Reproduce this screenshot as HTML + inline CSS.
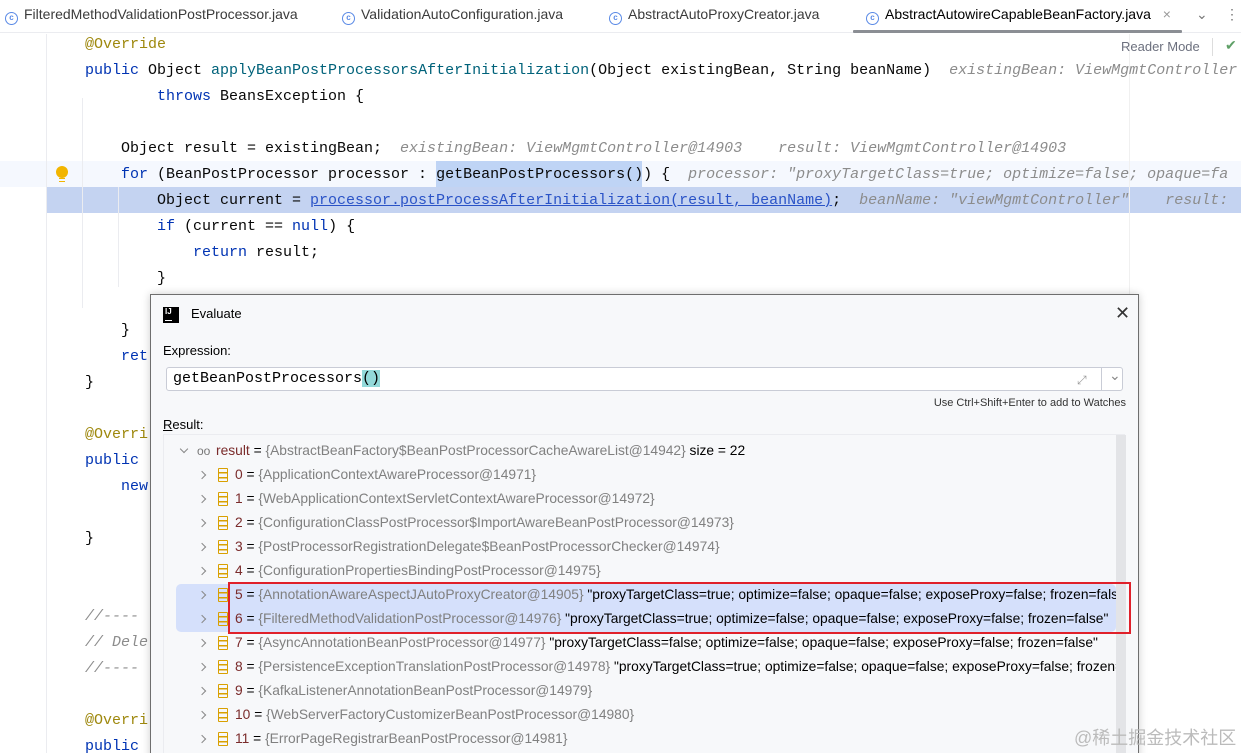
<!DOCTYPE html>
<html><head><meta charset="utf-8"><style>
*{margin:0;padding:0;box-sizing:border-box}
body{width:1241px;height:753px;overflow:hidden;background:#fff;position:relative;font-family:"Liberation Sans",sans-serif}
#wrap{position:absolute;left:0;top:0;width:1241px;height:753px;overflow:hidden}
.tabs{position:absolute;left:0;top:0;width:1241px;height:33px;border-bottom:1px solid #ebecf0;background:#fff}
.tab{position:absolute;top:6px;font-size:14px;color:#3b3b3b;white-space:nowrap}
.ci{display:inline-block;width:13px;height:13px;border:1.5px solid #5a8ae6;border-radius:50%;vertical-align:-1px;margin-right:6px;font-size:8px;color:#5a8ae6;text-align:center;line-height:10px;font-weight:bold}
.ul{position:absolute;left:853px;top:30px;width:329px;height:3px;background:#8b8e94;border-radius:1px}
.gl{position:absolute;top:34px;height:719px;width:1px;background:#ebecf0}
.code{position:absolute;font-family:"Liberation Mono",monospace;font-size:15px;color:#080808;white-space:pre;height:26px;line-height:26px}
.k{color:#0033b3}.m{color:#00627a}.a{color:#9e880d}.h{color:#8c8c8c;font-style:italic}.c{color:#8c8c8c;font-style:italic}
.u{color:#2a53c7;text-decoration:underline}
.dlg{position:absolute;left:150px;top:294px;width:989px;height:470px;background:#f7f8fa;border:1px solid #6e6e6e;box-shadow:0 0 8px rgba(0,0,0,.2)}
.tree{position:absolute;left:12px;top:139px;width:962px;height:330px;background:#f7f8fa;border-top:1px solid #ebecf0;border-left:1px solid #ebecf0}
.row{position:absolute;left:0;height:24px;line-height:24px;font-size:13.8px;white-space:nowrap;color:#000}
.chev{position:absolute;width:6px;height:6px;border-right:1.3px solid #888;border-bottom:1.3px solid #888;transform:rotate(-45deg)}
.ico{position:absolute;width:10px;height:14px;top:5px;border:1.5px solid #d9a000;border-radius:1px;background:linear-gradient(#d9a000,#d9a000) 0 3px/100% 1.5px no-repeat,linear-gradient(#d9a000,#d9a000) 0 7.5px/100% 1.5px no-repeat}
.i{color:#7a2b2b}.g{color:#808080}
</style></head><body><div id="wrap">
<div class="tabs">
<div class="tab" style="left:5px"><span class="ci">c</span>FilteredMethodValidationPostProcessor.java</div>
<div class="tab" style="left:342px"><span class="ci">c</span>ValidationAutoConfiguration.java</div>
<div class="tab" style="left:609px"><span class="ci">c</span>AbstractAutoProxyCreator.java</div>
<div class="tab" style="left:866px;color:#000"><span class="ci">c</span>AbstractAutowireCapableBeanFactory.java <span style="color:#999;margin-left:8px">×</span></div>
<div class="tab" style="left:1196px;color:#777">⌄</div>
<div class="tab" style="left:1225px;color:#777">⋮</div>
<div class="ul"></div>
</div>
<div style="position:absolute;left:0;top:161px;width:1241px;height:26px;background:#f5f8fe"></div>
<div style="position:absolute;left:46px;top:187px;width:1195px;height:26px;background:#c4d3f1"></div>
<div style="position:absolute;left:436px;top:161px;width:206px;height:26px;background:#bfd4f5"></div>
<div class="gl" style="left:46px"></div>
<div class="gl" style="left:1129px;background:#f0f0f0"></div>
<div style="position:absolute;left:82px;top:98px;width:1px;height:210px;background:#ebecf0"></div>
<div style="position:absolute;left:118px;top:187px;width:1px;height:100px;background:#ebecf0"></div>
<div style="position:absolute;left:56px;top:166px;width:12px;height:12px;border-radius:50%;background:#f2b500"></div>
<div style="position:absolute;left:59px;top:178px;width:6px;height:4px;border-top:1px solid #f2b500;border-bottom:1px solid #f2b500"></div>
<div style="position:absolute;left:1121px;top:39px;font-size:13px;color:#6c707e">Reader Mode</div>
<div style="position:absolute;left:1212px;top:38px;width:1px;height:18px;background:#ddd"></div>
<div style="position:absolute;left:1225px;top:37px;font-size:14px;color:#5fa067">✔</div>
<div class="code" style="left:85px;top:32px"><span class="a">@Override</span></div>
<div class="code" style="left:85px;top:58px"><span class="k">public</span> Object <span class="m">applyBeanPostProcessorsAfterInitialization</span>(Object existingBean, String beanName)  <span class="h">existingBean: ViewMgmtController</span></div>
<div class="code" style="left:157px;top:84px"><span class="k">throws</span> BeansException {</div>
<div class="code" style="left:121px;top:136px">Object result = existingBean;  <span class="h">existingBean: ViewMgmtController@14903    result: ViewMgmtController@14903</span></div>
<div class="code" style="left:121px;top:162px"><span class="k">for</span> (BeanPostProcessor processor : getBeanPostProcessors()) {  <span class="h">processor: "proxyTargetClass=true; optimize=false; opaque=fa</span></div>
<div class="code" style="left:157px;top:188px">Object current = <span class="u">processor.postProcessAfterInitialization(result, beanName)</span>;  <span class="h">beanName: "viewMgmtController"    result:</span></div>
<div class="code" style="left:157px;top:214px"><span class="k">if</span> (current == <span class="k">null</span>) {</div>
<div class="code" style="left:193px;top:240px"><span class="k">return</span> result;</div>
<div class="code" style="left:157px;top:266px">}</div>
<div class="code" style="left:121px;top:318px">}</div>
<div class="code" style="left:121px;top:344px"><span class="k">ret</span></div>
<div class="code" style="left:85px;top:370px">}</div>
<div class="code" style="left:85px;top:422px"><span class="a">@Overri</span></div>
<div class="code" style="left:85px;top:448px"><span class="k">public</span></div>
<div class="code" style="left:121px;top:474px"><span class="k">new</span></div>
<div class="code" style="left:85px;top:526px">}</div>
<div class="code" style="left:85px;top:604px"><span class="c">//----</span></div>
<div class="code" style="left:85px;top:630px"><span class="c">// Dele</span></div>
<div class="code" style="left:85px;top:656px"><span class="c">//----</span></div>
<div class="code" style="left:85px;top:708px"><span class="a">@Overri</span></div>
<div class="code" style="left:85px;top:734px"><span class="k">public</span></div>
<div class="dlg">
<div style="position:absolute;left:12px;top:12px;width:16px;height:16px;background:#000;color:#fff;font-size:8px;font-weight:bold;line-height:10px;padding-left:2px">IJ<div style="position:absolute;left:2px;bottom:2px;width:7px;height:1.5px;background:#fff"></div></div>
<div style="position:absolute;left:40px;top:11px;font-size:13px;color:#000">Evaluate</div>
<div style="position:absolute;left:964px;top:8px;font-size:18px;color:#333">✕</div>
<div style="position:absolute;left:12px;top:48px;font-size:13px;color:#000">Expression:</div>
<div style="position:absolute;left:15px;top:72px;width:957px;height:24px;background:#fff;border:1px solid #c9ccd6;border-radius:3px">
<div style="position:absolute;left:6px;top:0;font-family:'Liberation Mono',monospace;font-size:15px;line-height:22px;color:#000">getBeanPostProcessors<span style="background:#93d9d9">()</span></div>
<div style="position:absolute;left:910px;top:5px;font-size:12px;color:#999">⤢</div>
<div style="position:absolute;left:934px;top:0;width:1px;height:22px;background:#c9ccd6"></div>
<div style="position:absolute;left:942px;top:-1px;font-size:14px;color:#888">⌄</div>
</div>
<div style="position:absolute;right:12px;top:102px;font-size:11px;color:#333">Use Ctrl+Shift+Enter to add to Watches</div>
<div style="position:absolute;left:12px;top:122px;font-size:13px;color:#000"><u>R</u>esult:</div>
<div class="tree">
<div style="position:absolute;left:12px;top:149px;width:940px;height:48px;background:#d5e0fb;border-radius:5px"></div>
<div style="position:absolute;left:952px;top:0;width:10px;height:330px;background:#e3e4e7"></div>
<div class="row" style="top:4px"><div class="chev" style="left:17px;top:7px;transform:rotate(45deg)"></div><span style="position:absolute;left:33px;color:#777;font-size:12px">oo</span><span style="position:absolute;left:52px"><span class="i">result</span> = <span class="g">{AbstractBeanFactory$BeanPostProcessorCacheAwareList@14942}</span>  size = 22</span></div>
</div>
</div>
<script>
var rows=[["0","ApplicationContextAwareProcessor@14971",""],["1","WebApplicationContextServletContextAwareProcessor@14972",""],["2","ConfigurationClassPostProcessor$ImportAwareBeanPostProcessor@14973",""],["3","PostProcessorRegistrationDelegate$BeanPostProcessorChecker@14974",""],["4","ConfigurationPropertiesBindingPostProcessor@14975",""],["5","AnnotationAwareAspectJAutoProxyCreator@14905"," \"proxyTargetClass=true; optimize=false; opaque=false; exposeProxy=false; frozen=false\""],["6","FilteredMethodValidationPostProcessor@14976"," \"proxyTargetClass=true; optimize=false; opaque=false; exposeProxy=false; frozen=false\""],["7","AsyncAnnotationBeanPostProcessor@14977"," \"proxyTargetClass=false; optimize=false; opaque=false; exposeProxy=false; frozen=false\""],["8","PersistenceExceptionTranslationPostProcessor@14978"," \"proxyTargetClass=true; optimize=false; opaque=false; exposeProxy=false; frozen=false\""],["9","KafkaListenerAnnotationBeanPostProcessor@14979",""],["10","WebServerFactoryCustomizerBeanPostProcessor@14980",""],["11","ErrorPageRegistrarBeanPostProcessor@14981",""]];
var t=document.querySelector('.tree'),h='';
rows.forEach(function(r,i){var y=28+i*24;h+='<div class="row" style="top:'+y+'px;width:952px;overflow:hidden"><div class="chev" style="left:35px;top:9px"></div><div class="ico" style="left:54px"></div><span style="position:absolute;left:71px"><span class="i">'+r[0]+'</span> = <span class="g">{'+r[1]+'}</span>'+r[2]+'</span></div>';});
h+='<div style="position:absolute;left:64px;top:147px;width:903px;height:52px;border:2px solid #e0202a"></div>';
t.insertAdjacentHTML('beforeend',h);
</script>
<div style="position:absolute;left:1074px;top:724px;font-size:18px;color:#bbb;font-family:'Liberation Sans','Noto Sans CJK SC',sans-serif">@稀土掘金技术社区</div>
</div></body></html>
